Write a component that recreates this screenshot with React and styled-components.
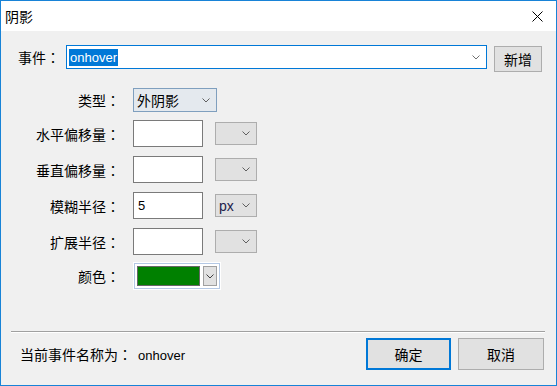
import React from 'react';
import styled, { createGlobalStyle } from 'styled-components';

const GlobalStyle = createGlobalStyle`
    html, body {
        margin:0;
        padding:0;
        background:#ffffff;
    }
    * {
        box-sizing:border-box;
    }
`

const cjk = `"Noto Sans CJK SC", "Liberation Sans", sans-serif`

const Window = styled.div`
    width:557px;
    height:386px;
    border:1px solid #1883d7;
    display:flex;
    flex-direction:column;
    font-family:${cjk};
    font-size:14px;
    color:#000;
    overflow:hidden;
`
const TitleBar = styled.div`
    height:30px;
    flex:none;
    background:#fff;
    display:flex;
    align-items:center;
    justify-content:space-between;
    padding:0 13px 0 4px;
`
const Title = styled.div`
    font-size:14px;
    line-height:20px;
`
const Body = styled.div`
    flex:1;
    background:#f0f0f0;
    display:flex;
    flex-direction:column;
    padding:14px 0 15px 0;
`
const EventRow = styled.div`
    display:flex;
    align-items:flex-start;
    padding-left:17px;
`
const EventLabel = styled.div`
    width:48px;
    line-height:24px;
`
// full-width colon centred in its cell, as the dialog font draws it
const Colon = styled.span`
    font-family:"Noto Sans CJK TC", sans-serif;
`
const EventBox = styled.div`
    width:421px;
    height:24px;
    background:#fff;
    border:1px solid #0078d7;
    display:flex;
    align-items:center;
    justify-content:space-between;
    padding:0 6px 0 2px;
`
const Selected = styled.span`
    font-family:"Liberation Sans", sans-serif;
    font-size:13px;
    line-height:17px;
    background:#0078d7;
    color:#fff;
    padding:0 1px;
`
const Button = styled.div`
    width:${p => p.$w}px;
    height:${p => p.$h}px;
    background:#e1e1e1;
    border:${p => p.$primary ? '2px solid #0078d7' : '1px solid #adadad'};
    display:flex;
    align-items:center;
    justify-content:center;
    font-size:14px;
    margin-top:${p => p.$mt || 0}px;
    margin-left:${p => p.$ml || 0}px;
`
const Form = styled.div`
    display:flex;
    flex-direction:column;
    gap:9px;
    margin-top:16px;
`
const Row = styled.div`
    display:flex;
    align-items:center;
    margin-top:${p => p.$mt || 0}px;
`
const Label = styled.div`
    width:119px;
    text-align:right;
    margin-right:13px;
    line-height:20px;
`
const TypeSelect = styled.div`
    width:84px;
    height:24px;
    background:#e4e9ee;
    border:1px solid #7f9fbe;
    display:flex;
    align-items:center;
    justify-content:space-between;
    padding:0 6px 0 3px;
    font-size:14px;
`
const TextBox = styled.div`
    width:70px;
    height:27px;
    background:#fff;
    border:1px solid #7a7a7a;
    font-family:"Liberation Sans", sans-serif;
    font-size:13px;
    line-height:25px;
    padding-left:4px;
`
const UnitSelect = styled.div`
    width:42px;
    height:23px;
    margin-left:12px;
    background:#e1e1e1;
    border:1px solid #adadad;
    display:flex;
    align-items:center;
    justify-content:space-between;
    padding:0 6px 0 3px;
    font-family:"Liberation Sans", sans-serif;
    font-size:14px;
    color:#20204a;
`
const ColorPicker = styled.div`
    width:88px;
    height:28px;
    background:#fff;
    padding:1px;
    display:flex;
`
const ColorInner = styled.div`
    flex:1;
    border:1px solid #b4c8e4;
    display:flex;
    align-items:stretch;
    padding:2px;
    gap:3px;
`
const Swatch = styled.div`
    width:63px;
    background:${p => p.$color};
    border:1px solid #666;
`
const ColorDrop = styled.div`
    flex:1;
    background:#e1e1e1;
    border:1px solid #a0a0a0;
    display:flex;
    align-items:center;
    justify-content:center;
`
const Spacer = styled.div`
    flex:1;
`
const Separator = styled.div`
    height:2px;
    margin:0 11px 0 10px;
    border-top:1px solid #a0a0a0;
    border-bottom:1px solid #fff;
`
const Footer = styled.div`
    display:flex;
    align-items:center;
    margin-top:5px;
    padding:0 12px 0 19px;
`
const Status = styled.div`
    flex:1;
    font-size:14px;
`
const StatusValue = styled.span`
    font-family:"Liberation Sans", sans-serif;
    font-size:13px;
    margin-left:6px;
`

const Chevron = ({ color = '#606060', w = 8 }) => (
    <svg width={w} height={5} viewBox="0 0 8 5">
        <path d="M0.5 0.5 L4 4 L7.5 0.5" fill="none" stroke={color} strokeWidth="1" />
    </svg>
)

const CloseIcon = () => (
    <svg width="11" height="11" viewBox="0 0 11 11">
        <path d="M0.5 0.5 L10.5 10.5 M10.5 0.5 L0.5 10.5" stroke="#000" strokeWidth="1" />
    </svg>
)

const fields = [
    { label: '水平偏移量', value: '', unit: '' },
    { label: '垂直偏移量', value: '', unit: '' },
    { label: '模糊半径', value: '5', unit: 'px' },
    { label: '扩展半径', value: '', unit: '' },
]

const App = () => {
    return (
        <>
            <GlobalStyle />
            <Window>
                <TitleBar>
                    <Title>阴影</Title>
                    <CloseIcon />
                </TitleBar>
                <Body>
                    <EventRow>
                        <EventLabel>事件<Colon>：</Colon></EventLabel>
                        <EventBox>
                            <Selected>onhover</Selected>
                            <Chevron color="#707070" />
                        </EventBox>
                        <Button $w={48} $h={26} $mt={1} $ml={7}>新增</Button>
                    </EventRow>
                    <Form>
                        <Row>
                            <Label>类型<Colon>：</Colon></Label>
                            <TypeSelect>
                                <span>外阴影</span>
                                <Chevron />
                            </TypeSelect>
                        </Row>
                        {fields.map((f, index) => (
                            <Row key={index} $mt={index === 0 ? -1 : 0}>
                                <Label>{f.label}<Colon>：</Colon></Label>
                                <TextBox>{f.value}</TextBox>
                                <UnitSelect>
                                    <span>{f.unit}</span>
                                    <Chevron />
                                </UnitSelect>
                            </Row>
                        ))}
                        <Row $mt={-2}>
                            <Label>颜色<Colon>：</Colon></Label>
                            <ColorPicker>
                                <ColorInner>
                                    <Swatch $color="#008000" />
                                    <ColorDrop>
                                        <Chevron color="#404040" />
                                    </ColorDrop>
                                </ColorInner>
                            </ColorPicker>
                        </Row>
                    </Form>
                    <Spacer />
                    <Separator />
                    <Footer>
                        <Status>
                            当前事件名称为<Colon>：</Colon><StatusValue>onhover</StatusValue>
                        </Status>
                        <Button $w={85} $h={32} $primary>确定</Button>
                        <Button $w={86} $h={32} $ml={7}>取消</Button>
                    </Footer>
                </Body>
            </Window>
        </>
    )
}

export default App
